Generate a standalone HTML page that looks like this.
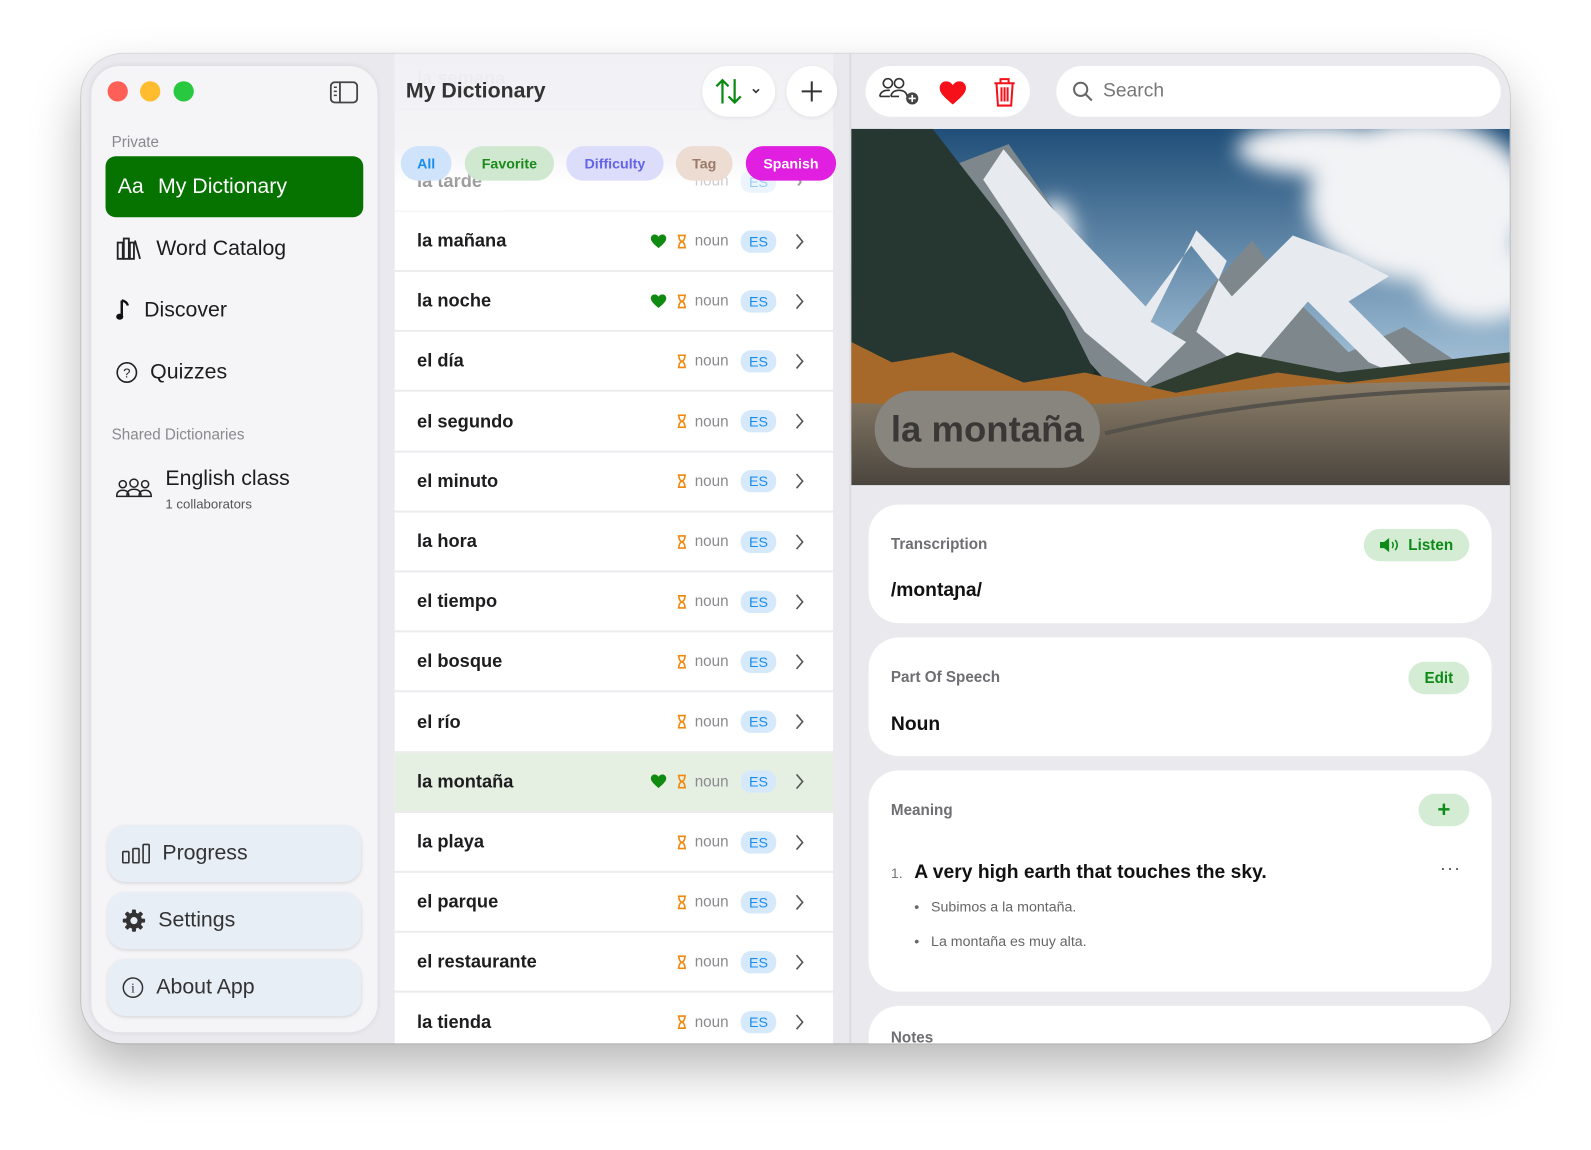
<!DOCTYPE html>
<html><head><meta charset="utf-8"><style>
*{box-sizing:border-box;margin:0;padding:0}
html,body{width:1591px;height:1150px;overflow:hidden;background:#fff;font-family:"Liberation Sans",sans-serif}
#s{position:absolute;left:0;top:0;width:1568px;height:1133px;transform:scale(1.0147,1.0150);transform-origin:0 0}
.a{position:absolute}
.win{left:80px;top:53px;width:1408px;height:975px;border-radius:42px;background:#e9e9ee;overflow:hidden;box-shadow:0 25px 50px rgba(0,0,0,.28),0 0 0 1px rgba(0,0,0,.12)}
.side{left:10px;top:12px;width:282px;height:952px;background:#f5f5f7;border-radius:28px;box-shadow:0 0 6px rgba(0,0,0,.08)}
.dot{width:20px;height:20px;border-radius:50%;top:15px}
.nav{left:14px;font-size:21px;color:#1d1d1f;display:flex;align-items:center;gap:12px}
.lbl{font-size:15px;color:#8a8a8e;left:20px}
.bb{left:16px;width:250px;height:56px;border-radius:18px;background:#e8eef6;box-shadow:0 1px 3px rgba(0,0,0,.12);display:flex;align-items:center;padding-left:14px;gap:12px;font-size:21px;color:#333}
.list{left:309px;top:0;width:432px;height:975px;background:#fff}
.row{position:absolute;left:0;width:432px;height:59px;border-bottom:2px solid #ececef;display:flex;align-items:center;padding-left:22px;font-size:18px;font-weight:bold;color:#1d1d1f}
.row .r{position:absolute;right:0;top:0;height:57px;display:flex;align-items:center}
.noun{font-size:15px;color:#8a8a8e;font-weight:normal;margin:0 12px 0 8px}
.es{background:#d6e9fb;color:#1a8cf0;font-size:14px;font-weight:normal;border-radius:10px;width:35px;height:22px;display:flex;align-items:center;justify-content:center}
.chev{width:30px;display:flex;justify-content:center;margin-right:18px;margin-left:8px}
.chip{top:91px;height:34px;border-radius:17px;font-size:14px;font-weight:bold;display:flex;align-items:center;justify-content:center}
.card{left:17px;width:614px;background:#fff;border-radius:30px}
.ct{position:absolute;left:22px;font-size:15px;color:#6e6e73;font-weight:bold}
.gbtn{position:absolute;right:22px;background:#d4ecd3;color:#0d8a17;font-weight:bold;font-size:15px;border-radius:17px;height:32px;display:flex;align-items:center;justify-content:center}
</style></head><body><div id="s">
<div class="a win">
 <div class="a side">
  <div class="a dot" style="left:16px;background:#fe5f57"></div>
  <div class="a dot" style="left:48px;background:#febc2e"></div>
  <div class="a dot" style="left:81px;background:#28c840"></div>
  <svg class="a" style="left:235px;top:15px" width="28" height="22" viewBox="0 0 28 22"><rect x="1" y="1" width="26" height="20" rx="4" fill="none" stroke="#444" stroke-width="1.8"/><line x1="10" y1="1" x2="10" y2="21" stroke="#444" stroke-width="1.8"/><line x1="4" y1="6" x2="7" y2="6" stroke="#444" stroke-width="1.5"/><line x1="4" y1="10" x2="7" y2="10" stroke="#444" stroke-width="1.5"/><line x1="4" y1="14" x2="7" y2="14" stroke="#444" stroke-width="1.5"/></svg>
  <div class="a lbl" style="top:67px">Private</div>
  <div class="a" style="left:14px;top:89px;width:254px;height:60px;background:#067300;border-radius:10px;color:#fff;font-size:21px;display:flex;align-items:center;padding-left:12px;gap:14px"><span>Aa</span><span>My Dictionary</span></div>
  <div class="a nav" style="top:168px;left:24px"><svg width="28" height="24" viewBox="0 0 28 24" fill="none" stroke="#222" stroke-width="1.8"><rect x="2" y="6" width="5" height="16"/><rect x="8" y="2" width="5" height="20"/><rect x="14" y="6" width="4" height="16"/><path d="M19 4l5 18"/></svg><span>Word Catalog</span></div>
  <div class="a nav" style="top:229px;left:24px"><svg width="16" height="24" viewBox="0 0 16 24"><path d="M6 2v15" stroke="#111" stroke-width="2.4"/><ellipse cx="4" cy="18" rx="3.5" ry="3" fill="#111"/><path d="M6 2q5 1 6 5" stroke="#111" stroke-width="2.4" fill="none"/></svg><span>Discover</span></div>
  <div class="a nav" style="top:290px;left:24px"><svg width="22" height="22" viewBox="0 0 22 22"><circle cx="11" cy="11" r="9.5" fill="none" stroke="#222" stroke-width="1.6"/><text x="11" y="16" text-anchor="middle" font-size="13" font-family="Liberation Sans" fill="#222">?</text></svg><span>Quizzes</span></div>
  <div class="a lbl" style="top:355px">Shared Dictionaries</div>
  <svg class="a" style="left:24px;top:405px" width="36" height="22" viewBox="0 0 36 22" fill="none" stroke="#222" stroke-width="1.5"><circle cx="7" cy="7" r="3.5"/><circle cx="18" cy="6" r="4"/><circle cx="29" cy="7" r="3.5"/><path d="M1 19q0-6 6-6t6 6zM11 19q0-7 7-7t7 7zM23 19q0-6 6-6t6 6z"/></svg>
  <div class="a" style="left:73px;top:395px;font-size:21px;color:#1d1d1f">English class</div>
  <div class="a" style="left:73px;top:424px;font-size:13px;color:#555">1 collaborators</div>
  <div class="a bb" style="top:748px"><svg width="28" height="20" viewBox="0 0 28 20" fill="none" stroke="#333" stroke-width="1.6"><rect x="1" y="8" width="6" height="11" rx="1"/><rect x="11" y="5" width="6" height="14" rx="1"/><rect x="21" y="1" width="6" height="18" rx="1"/></svg><span>Progress</span></div>
  <div class="a bb" style="top:814px"><svg width="24" height="24" viewBox="0 0 24 24"><g fill="#333"><circle cx="12" cy="12" r="8"/><rect x="10" y="1" width="4" height="22" rx="1"/><rect x="10" y="1" width="4" height="22" rx="1" transform="rotate(45 12 12)"/><rect x="10" y="1" width="4" height="22" rx="1" transform="rotate(90 12 12)"/><rect x="10" y="1" width="4" height="22" rx="1" transform="rotate(135 12 12)"/></g><circle cx="12" cy="12" r="3.5" fill="#e8eef6"/></svg><span>Settings</span></div>
  <div class="a bb" style="top:880px"><svg width="22" height="22" viewBox="0 0 22 22"><circle cx="11" cy="11" r="9.5" fill="none" stroke="#333" stroke-width="1.5"/><text x="11" y="16" text-anchor="middle" font-size="13" font-family="Liberation Serif" fill="#333">i</text></svg><span>About App</span></div>
 </div>

 <div class="a list">
  <div class="row" style="top:-4px;color:#aaa;opacity:.5"><span>la semana</span></div>
  <div class="row" style="top:97px;opacity:.45"><span>la tarde</span><div class="r"><span class="noun">noun</span><span class="es">ES</span><span class="chev">›</span></div></div>
  <div id="rows"></div>
 </div>
 <div class="a" style="left:309px;top:0;width:432px;height:130px;background:linear-gradient(rgba(240,240,244,.93),rgba(240,240,244,.75) 70%,rgba(255,255,255,0))"></div>
 <div class="a" style="left:320px;top:25px;font-size:21px;font-weight:bold;color:#333">My Dictionary</div>
 <div class="a" style="left:612px;top:12px;width:72px;height:50px;border-radius:25px;background:#fff;box-shadow:0 1px 4px rgba(0,0,0,.08)"><svg class="a" style="left:12px;top:11px" width="46" height="28" viewBox="0 0 46 28" fill="none" stroke="#0a8a12" stroke-width="2.2"><path d="M8 26V3M2 9l6-6 6 6M20 2v23M14 19l6 6 6-6"/><path d="M38 12l3 3 3-3" stroke="#333" stroke-width="1.6"/></svg></div>
 <div class="a" style="left:695px;top:12px;width:50px;height:50px;border-radius:25px;background:#fff;box-shadow:0 1px 4px rgba(0,0,0,.08)"><svg class="a" style="left:15px;top:15px" width="20" height="20"><path d="M10 0v20M0 10h20" stroke="#333" stroke-width="2"/></svg></div>
 <div class="a chip" style="left:315px;width:50px;background:#cfe4fa;color:#1a8cf0">All</div>
 <div class="a chip" style="left:378px;width:88px;background:#d1e8d0;color:#1a8a1a">Favorite</div>
 <div class="a chip" style="left:478px;width:96px;background:#dcdcfb;color:#6464e8">Difficulty</div>
 <div class="a chip" style="left:586px;width:56px;background:#ecdcd2;color:#9a7a6a">Tag</div>
 <div class="a chip" style="left:655px;width:89px;background:#e01fe0;color:#fff">Spanish</div>

 <div class="a" style="left:757px;top:0;width:2px;height:975px;background:#dcdce0"></div>

 <div class="a" style="left:773px;top:12px;width:162px;height:50px;border-radius:25px;background:#fff"></div>
 <svg class="a" style="left:786px;top:22px" width="40" height="30" viewBox="0 0 40 30" fill="none" stroke="#333" stroke-width="1.6"><circle cx="9" cy="7" r="4.5"/><circle cx="20" cy="7" r="4.5"/><path d="M1 20q1-6 8-6h2M12 20q1-6 8-6t8 6" /><path d="M1 20h10M12 20h8"/><circle cx="33" cy="22" r="6" fill="#444" stroke="none"/><path d="M33 18.5v7M29.5 22h7" stroke="#fff" stroke-width="1.6"/></svg>
 <svg class="a" style="left:846px;top:27px" width="26" height="24" viewBox="0 0 26 24"><path d="M13 23C5 16 0 12 0 6.5 0 3 2.8 0 6.5 0 9.5 0 12 2 13 4 14 2 16.5 0 19.5 0 23.2 0 26 3 26 6.5 26 12 21 16 13 23z" fill="#f5101a"/></svg>
 <svg class="a" style="left:898px;top:23px" width="24" height="30" viewBox="0 0 24 30" fill="none" stroke="#f5101a" stroke-width="2"><path d="M2 6h20M8 6V2h8v4M4 6l1.5 22h13L20 6M9 10v14M12 10v14M15 10v14"/></svg>
 <div class="a" style="left:961px;top:12px;width:438px;height:50px;border-radius:25px;background:#fff;display:flex;align-items:center;padding-left:16px;gap:10px;font-size:19px;color:#777"><svg width="20" height="20" viewBox="0 0 20 20" fill="none" stroke="#666" stroke-width="2"><circle cx="8" cy="8" r="6.5"/><path d="M13 13l6 6"/></svg><span>Search</span></div>

 <svg class="a" style="left:759px;top:74px" width="649" height="351" viewBox="0 0 649 351" preserveAspectRatio="none">
  <defs><linearGradient id="sky" x1="0" y1="0" x2="0" y2="1"><stop offset="0" stop-color="#1f4e78"/><stop offset=".7" stop-color="#a9c6dc"/></linearGradient>
  <linearGradient id="gr" x1="0" y1="0" x2="0" y2="1"><stop offset="0" stop-color="#8d7f6a"/><stop offset="1" stop-color="#4a453e"/></linearGradient>
  <filter id="bl"><feGaussianBlur stdDeviation="10"/></filter></defs>
  <rect width="649" height="351" fill="url(#sky)"/>
  <g filter="url(#bl)" fill="#f2f3f5"><ellipse cx="560" cy="70" rx="110" ry="80"/><ellipse cx="620" cy="150" rx="60" ry="40"/><ellipse cx="460" cy="20" rx="80" ry="25"/><ellipse cx="200" cy="110" rx="20" ry="40"/></g>
  <path d="M90 40l65-25 90 130 60 70 50-60 40-45 45 60 50 50 55-25 60 40 54 8v150H0V0z" fill="#7d878c"/>
  <path d="M150 20l-20 30 100 150 60 50 40-40-35-20 45-90 30 30-30 70 50 40 60-70 60 60 70 30-60-60-30-30 40-25-40-20-55-20-60 60-40-50-45 60-95-100z" fill="#e7eaee"/>
  <path d="M0 0h40l60 60 80 110 100 110-80 40H0z" fill="#1d2b26"/>
  <path d="M0 0h80l70 90 60 90 30 60-70 30H0z" fill="#263630"/>
  <path d="M280 260l100-40 100 20 169-20v60H280z" fill="#2f3d30"/>
  <path d="M0 210l40 20 60-10 70 30 60-10 90 20 100-20 70 10 159-20v60H0z" fill="#a6692a"/>
  <path d="M0 270q140 5 270 0 190-25 379-20v101H0z" fill="url(#gr)"/>
  <path d="M250 300q170-40 399-45" stroke="#55514b" stroke-width="4" fill="none"/>
 </svg>
 <div class="a" style="left:782px;top:332px;width:222px;height:76px;border-radius:38px;background:#88857f;font-size:36px;font-weight:bold;color:#3a3836;display:flex;align-items:center;justify-content:center">la montaña</div>

 <div class="a card" style="left:776px;top:444px;height:117px"><div class="ct" style="top:31px">Transcription</div><div class="gbtn" style="top:24px;width:104px"><svg width="18" height="14" viewBox="0 0 18 14" style="margin-right:10px"><path d="M0 4h4l5-4v14l-5-4H0z" fill="#0d8a17"/><path d="M12 4q2 3 0 6M15 2q4 5 0 10" stroke="#0d8a17" stroke-width="1.5" fill="none"/></svg>Listen</div><div class="a" style="left:22px;top:74px;font-size:19px;font-weight:bold;color:#111">/montaɲa/</div></div>
 <div class="a card" style="left:776px;top:575px;height:117px"><div class="ct" style="top:31px">Part Of Speech</div><div class="gbtn" style="top:24px;width:60px">Edit</div><div class="a" style="left:22px;top:75px;font-size:19px;font-weight:bold;color:#111">Noun</div></div>
 <div class="a card" style="left:776px;top:706px;height:218px"><div class="ct" style="top:31px">Meaning</div><div class="gbtn" style="top:23px;width:50px;font-size:22px">+</div>
  <div class="a" style="left:22px;top:93px;font-size:14px;color:#777">1.</div>
  <div class="a" style="left:45px;top:90px;font-size:19px;font-weight:bold;color:#111">A very high earth that touches the sky.</div>
  <div class="a" style="left:563px;top:86px;font-size:18px;color:#555;letter-spacing:1px">···</div>
  <div class="a" style="left:45px;top:126px;font-size:14px;color:#666">•&nbsp;&nbsp;&nbsp;Subimos a la montaña.</div>
  <div class="a" style="left:45px;top:160px;font-size:14px;color:#666">•&nbsp;&nbsp;&nbsp;La montaña es muy alta.</div>
 </div>
 <div class="a card" style="left:776px;top:938px;height:80px"><div class="ct" style="top:23px">Notes</div></div>
</div>
</div>
<script>
var w=[["la mañana",1],["la noche",1],["el día",0],["el segundo",0],["el minuto",0],["la hora",0],["el tiempo",0],["el bosque",0],["el río",0],["la montaña",1],["la playa",0],["el parque",0],["el restaurante",0],["la tienda",0]];
var h='';w.forEach(function(x,i){var top=156+59.2*i;
h+='<div class="row" style="top:'+top+'px;'+(i==9?'background:#e5f0e2;':'')+'"><span>'+x[0]+'</span><div class="r">'+(x[1]?'<svg width="16" height="14" viewBox="0 0 26 24" style="margin-right:10px"><path d="M13 23C5 16 0 12 0 6.5 0 3 2.8 0 6.5 0 9.5 0 12 2 13 4 14 2 16.5 0 19.5 0 23.2 0 26 3 26 6.5 26 12 21 16 13 23z" fill="#108a10"/></svg>':'')+'<svg width="10" height="14" viewBox="0 0 10 14"><path d="M1 1h8M1 13h8M2 1q0 5 3 6 3 1 3 6M8 1q0 5-3 6-3 1-3 6" stroke="#f08a10" stroke-width="1.6" fill="none"/></svg><span class="noun">noun</span><span class="es">ES</span><span class="chev"><svg width="10" height="16"><path d="M2 1l6 7-6 7" stroke="#555" stroke-width="1.6" fill="none"/></svg></span></div></div>';});
document.getElementById('rows').outerHTML=h;
</script>
</body></html>
